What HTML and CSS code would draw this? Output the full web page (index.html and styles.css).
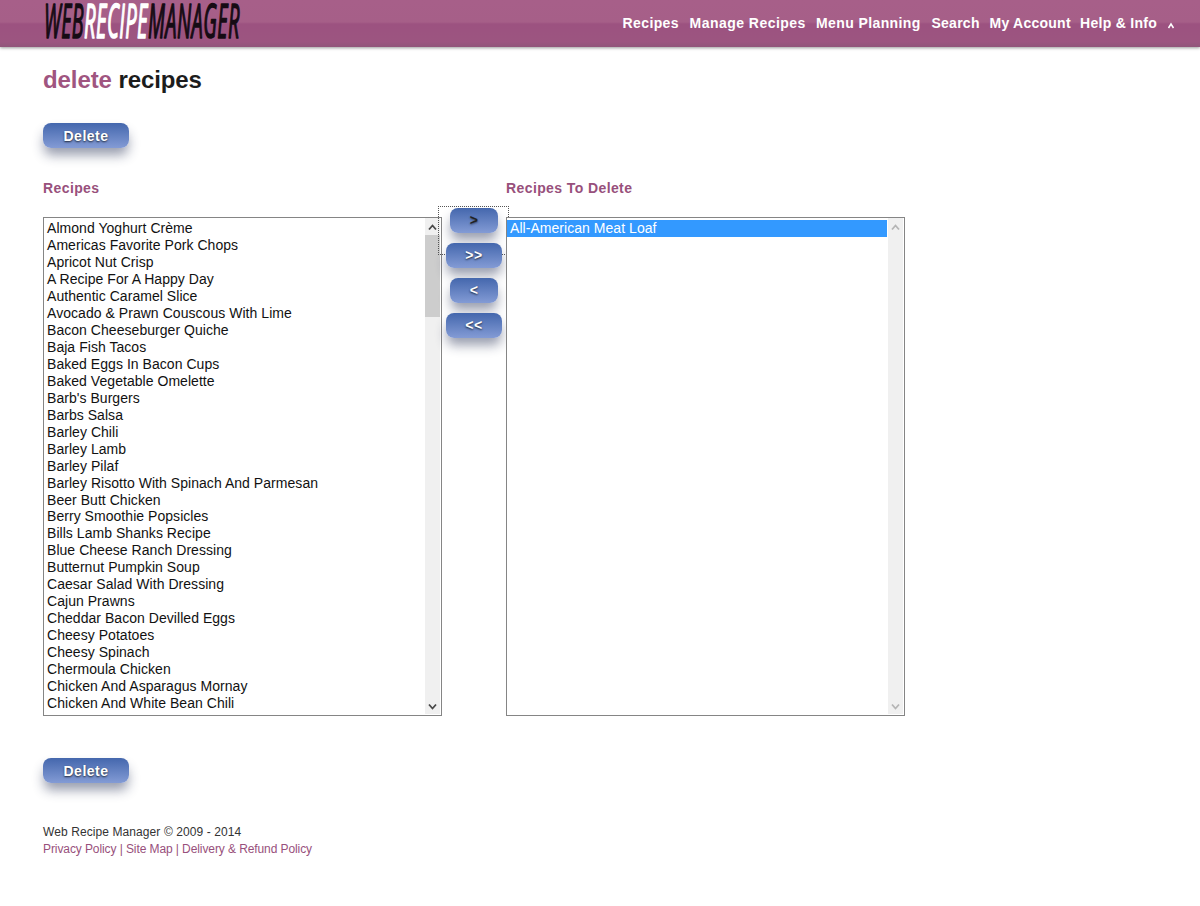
FILE: index.html
```html
<!DOCTYPE html>
<html lang="en">
<head>
<meta charset="utf-8">
<title>Web Recipe Manager - Delete Recipes</title>
<link rel="stylesheet" href="styles.css">
</head>
<body>
<header class="topbar">
  <svg class="logo" width="204" height="46" viewBox="0 0 204 46" role="img" aria-label="Web Recipe Manager">
    <text class="logo-text" transform="translate(3 38) scale(.5 1)" textLength="80" lengthAdjust="spacingAndGlyphs">WEB</text>
    <text class="logo-text logo-light" transform="translate(43 38) scale(.5 1)" textLength="128" lengthAdjust="spacingAndGlyphs">RECIPE</text>
    <text class="logo-text" transform="translate(107 38) scale(.5 1)" textLength="184" lengthAdjust="spacingAndGlyphs">MANAGER</text>
  </svg>
  <nav class="menu">
    <a class="w-recipes">Recipes</a><a class="w-manage">Manage Recipes</a><a class="w-menu">Menu Planning</a><a class="w-search">Search</a><a class="w-account">My Account</a><a class="w-help">Help &amp; Info</a>
    <svg class="caret" width="8" height="7" viewBox="0 0 8 7"><path d="M1.5 6 4 2 6.500 6" fill="none" stroke="#fff" stroke-width="1.5"/></svg>
  </nav>
</header>
<main class="page">
  <h1 class="title"><span class="accent">delete</span> recipes</h1>
  <button class="btn btn-delete">Delete</button>
  <div class="picker">
    <section class="column">
      <h2 class="label">Recipes</h2>
      <div class="listbox">
        <ul class="options">
          <li>Almond Yoghurt Crème</li><li>Americas Favorite Pork Chops</li><li>Apricot Nut Crisp</li><li>A Recipe For A Happy Day</li><li>Authentic Caramel Slice</li><li>Avocado &amp; Prawn Couscous With Lime</li><li>Bacon Cheeseburger Quiche</li><li>Baja Fish Tacos</li><li>Baked Eggs In Bacon Cups</li><li>Baked Vegetable Omelette</li><li>Barb's Burgers</li><li>Barbs Salsa</li><li>Barley Chili</li><li>Barley Lamb</li><li>Barley Pilaf</li><li>Barley Risotto With Spinach And Parmesan</li><li>Beer Butt Chicken</li><li>Berry Smoothie Popsicles</li><li>Bills Lamb Shanks Recipe</li><li>Blue Cheese Ranch Dressing</li><li>Butternut Pumpkin Soup</li><li>Caesar Salad With Dressing</li><li>Cajun Prawns</li><li>Cheddar Bacon Devilled Eggs</li><li>Cheesy Potatoes</li><li>Cheesy Spinach</li><li>Chermoula Chicken</li><li>Chicken And Asparagus Mornay</li><li>Chicken And White Bean Chili</li>
        </ul>
        <div class="scrollbar">
          <svg class="arrow" width="16" height="17" viewBox="0 0 16 17"><path d="M4 11.500 7.500 7.500 11 11.500" /></svg>
          <div class="thumb"></div>
          <svg class="arrow" width="16" height="17" viewBox="0 0 16 17"><path d="M4 7.500 7.500 11.500 11 7.500" /></svg>
        </div>
      </div>
    </section>
    <div class="transfer">
      <span class="focus-ring"></span>
      <button class="btn btn-one focused">&gt;</button>
      <button class="btn btn-all">&gt;&gt;</button>
      <button class="btn btn-one">&lt;</button>
      <button class="btn btn-all">&lt;&lt;</button>
    </div>
    <section class="column front">
      <h2 class="label">Recipes To Delete</h2>
      <div class="listbox">
        <ul class="options"><li class="selected">All-American Meat Loaf</li></ul>
        <div class="scrollbar disabled">
          <svg class="arrow" width="16" height="17" viewBox="0 0 16 17"><path d="M4 11.500 7.500 7.500 11 11.500" /></svg>
          <svg class="arrow" width="16" height="17" viewBox="0 0 16 17"><path d="M4 7.500 7.500 11.500 11 7.500" /></svg>
        </div>
      </div>
    </section>
  </div>
  <button class="btn btn-delete">Delete</button>
  <footer class="footer">
    <div>Web Recipe Manager © 2009 - 2014</div>
    <div class="links"><a>Privacy Policy</a> | <a>Site Map</a> | <a>Delivery &amp; Refund Policy</a></div>
  </footer>
</main>
</body>
</html>
```
FILE: styles.css
```css
* { box-sizing: border-box; }
body {
  margin: 0;
  height: 906px;
  overflow: hidden;
  background: #fff;
  color: #222;
  font-family: "Liberation Sans", Arial, sans-serif;
}
.topbar {
  display: flex;
  justify-content: space-between;
  height: 47px;
  padding: 0 25px 0 41px;
  background: linear-gradient(#a75f89 0, #a65f88 22px, #9c5280 24px, #9c5580 42px, #90557a 47px);
  box-shadow: 0 1px 3px rgba(0, 0, 0, .4);
}
.logo { display: block; overflow: visible; }
.logo-text {
  font: italic 400 47px "Open Sans", sans-serif;
  letter-spacing: 1px;
  fill: #160b14;
  stroke: #160b14;
  stroke-width: 1.6px;
  stroke-linejoin: round;
}
.logo-light { fill: #fff; stroke: #fff; }
.menu {
  display: flex;
  height: 46px;
  align-items: center;
  color: #fff;
  font-size: 14px;
  font-weight: bold;
  letter-spacing: .4px;
  white-space: nowrap;
}
.w-recipes { width: 67px; }
.w-manage { width: 126.5px; letter-spacing: .47px; }
.w-menu { width: 115.5px; }
.w-search { width: 58px; letter-spacing: .25px; }
.w-account { width: 90.5px; letter-spacing: .25px; }
.w-help { width: 87px; letter-spacing: .3px; }
.caret { margin-top: 4px; }
.page { padding: 18px 43px 0; }
.title { margin: 0; font-size: 24px; line-height: 30px; height: 58px; letter-spacing: -.09px; color: #1c1c1c; }
.accent { color: #a05580; }
.btn {
  display: block;
  height: 25px;
  padding: 0;
  border: 0;
  border-radius: 8px;
  background: linear-gradient(#4467ad, #839bd5);
  box-shadow: 0 8px 12px -1px rgba(40, 50, 85, .48);
  color: #fff;
  font: bold 14px/25px "Liberation Sans", Arial, sans-serif;
  letter-spacing: .5px;
  text-shadow: 0 1px 2px rgba(0, 0, 0, .75);
}
.btn-delete { width: 86px; padding-top: 1px; line-height: 24px; }
.picker { display: flex; margin-top: 30px; height: 580px; }
.column { width: 399px; }
.front { position: relative; }
.label { margin: 0; height: 39px; color: #98507c; font-size: 14px; line-height: 20px; letter-spacing: .4px; }
.listbox {
  display: flex;
  width: 399px;
  height: 499px;
  padding: 2px 1px 1px 0;
  border: 1px solid #858585;
  background: #fff;
}
.options { flex: 1; margin: 0; padding: 0; list-style: none; font-size: 14px; line-height: 17px; letter-spacing: .045px; color: #111; }
.options li { height: 16.98px; padding-left: 3px; white-space: nowrap; }
.options .selected { margin-right: 1px; background: #3399ff; color: #fff; }
.scrollbar { display: flex; flex-direction: column; width: 15px; margin-top: -2px; background: #f0f0f0; }
.arrow { display: block; flex: none; fill: none; stroke: #484848; stroke-width: 1.8; }
.arrow:last-child { margin-top: auto; }
.disabled .arrow { stroke: #b5b5b5; }
.thumb { height: 82px; background: #cdcdcd; }
.transfer {
  position: relative;
  display: flex;
  flex-direction: column;
  align-items: center;
  gap: 10px;
  width: 64px;
  padding-top: 30px;
}
.transfer .btn { position: relative; }
.btn-one { width: 48px; }
.btn-all { width: 56px; }
.transfer .focused { color: #222; text-shadow: 0 1px 2px rgba(0, 0, 0, .5); }
.focus-ring {
  position: absolute;
  left: -4px;
  top: 28px;
  width: 71px;
  height: 49px;
  border: 1px dotted #555;
}
.footer { margin-top: 41px; font-size: 12px; line-height: 17px; letter-spacing: .09px; color: #333; }
.links { color: #98507c; letter-spacing: -.09px; }
```
